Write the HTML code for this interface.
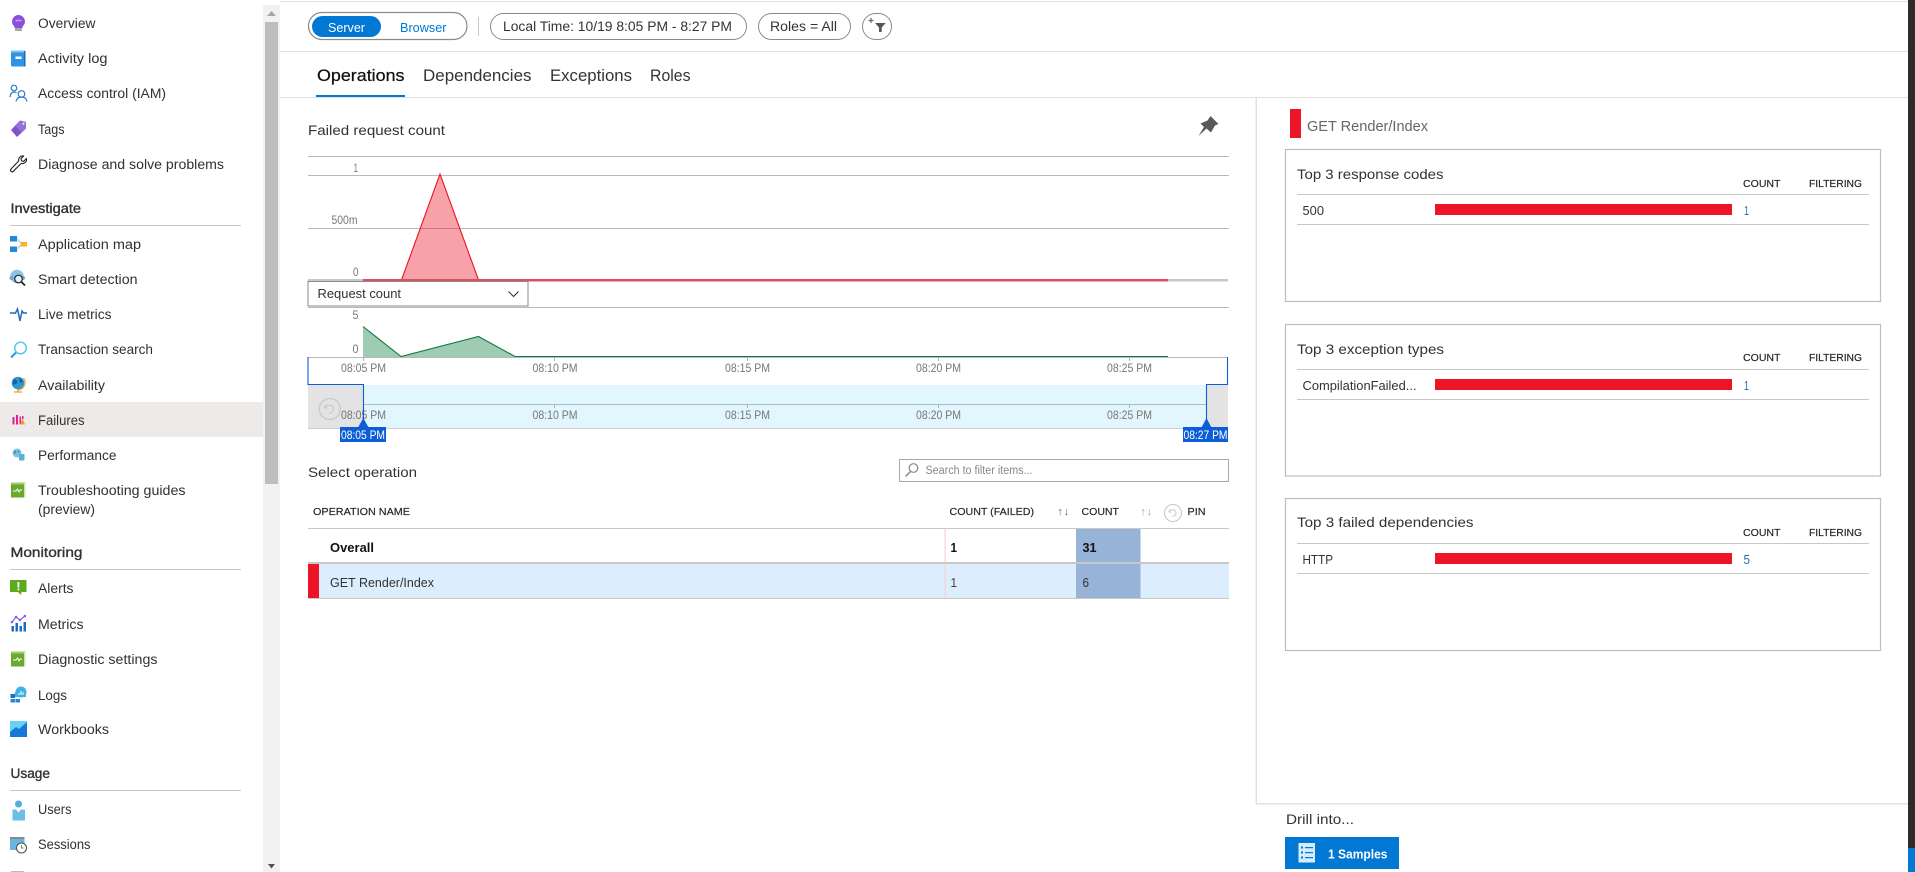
<!DOCTYPE html>
<html lang="en"><head><meta charset="utf-8"><title>Failures</title>
<style>
html,body{margin:0;padding:0;background:#fff;width:1915px;height:872px;overflow:hidden}
svg{display:block}
text{font-family:"Liberation Sans",sans-serif;white-space:pre}
.s{font-size:13.5px;fill:#323130}
.h{font-size:13.5px;fill:#323130;stroke:#323130;stroke-width:.35}
.ax{font-size:11.5px;fill:#777}
.th{font-size:10.5px;fill:#222;stroke:#222;stroke-width:.15}
.tt{font-size:14px;fill:#333}
.c{font-size:12.5px;fill:#333}
.n{font-size:12.5px;fill:#2b6cb5}
</style></head><body>
<svg width="1915" height="872" viewBox="0 0 1915 872" xmlns="http://www.w3.org/2000/svg">
<rect width="1915" height="872" fill="#fff"/>
<!-- right dark edge -->
<rect x="1908" y="0" width="7" height="872" fill="#2b2b2b"/>
<rect x="1908" y="848" width="7" height="24" fill="#0078d4"/>

<!-- sidebar scrollbar -->
<rect x="263" y="5" width="17" height="867" fill="#f1f1f1"/>
<rect x="265" y="22" width="13" height="462" fill="#bdbdbd"/>
<path d="M267 16l4.500-5 4.500 5z" fill="#a6a6a6"/>
<path d="M268 864h7l-3.500 4.500z" fill="#505050"/>

<!-- failures row -->
<rect x="0" y="402" width="263" height="35" fill="#edebe9"/>

<!-- sidebar text -->
<g class="sb">
<text class="s" x="38" y="28" textLength="57.500" lengthAdjust="spacingAndGlyphs">Overview</text>
<text class="s" x="38" y="63" textLength="69.500" lengthAdjust="spacingAndGlyphs">Activity log</text>
<text class="s" x="38" y="98" textLength="128" lengthAdjust="spacingAndGlyphs">Access control (IAM)</text>
<text class="s" x="38" y="134" textLength="26.500" lengthAdjust="spacingAndGlyphs">Tags</text>
<text class="s" x="38" y="169" textLength="186" lengthAdjust="spacingAndGlyphs">Diagnose and solve problems</text>
<text class="h" x="10.500" y="213" textLength="70.500" lengthAdjust="spacingAndGlyphs">Investigate</text>
<text class="s" x="38" y="249" textLength="103" lengthAdjust="spacingAndGlyphs">Application map</text>
<text class="s" x="38" y="284" textLength="99.500" lengthAdjust="spacingAndGlyphs">Smart detection</text>
<text class="s" x="38" y="319" textLength="73.500" lengthAdjust="spacingAndGlyphs">Live metrics</text>
<text class="s" x="38" y="354" textLength="115" lengthAdjust="spacingAndGlyphs">Transaction search</text>
<text class="s" x="38" y="390" textLength="67" lengthAdjust="spacingAndGlyphs">Availability</text>
<text class="s" x="38" y="425" textLength="46.500" lengthAdjust="spacingAndGlyphs">Failures</text>
<text class="s" x="38" y="460" textLength="78.500" lengthAdjust="spacingAndGlyphs">Performance</text>
<text class="s" x="38" y="495" textLength="147.500" lengthAdjust="spacingAndGlyphs">Troubleshooting guides</text>
<text class="s" x="38" y="514" textLength="57" lengthAdjust="spacingAndGlyphs">(preview)</text>
<text class="h" x="10.500" y="557" textLength="72" lengthAdjust="spacingAndGlyphs">Monitoring</text>
<text class="s" x="38" y="593" textLength="35.500" lengthAdjust="spacingAndGlyphs">Alerts</text>
<text class="s" x="38" y="629" textLength="45.500" lengthAdjust="spacingAndGlyphs">Metrics</text>
<text class="s" x="38" y="664" textLength="119.500" lengthAdjust="spacingAndGlyphs">Diagnostic settings</text>
<text class="s" x="38" y="700" textLength="29" lengthAdjust="spacingAndGlyphs">Logs</text>
<text class="s" x="38" y="734" textLength="71" lengthAdjust="spacingAndGlyphs">Workbooks</text>
<text class="h" x="10.500" y="778" textLength="39.500" lengthAdjust="spacingAndGlyphs">Usage</text>
<text class="s" x="38" y="814" textLength="33.500" lengthAdjust="spacingAndGlyphs">Users</text>
<text class="s" x="38" y="849" textLength="52.500" lengthAdjust="spacingAndGlyphs">Sessions</text>
</g>
<rect x="10" y="225" width="231" height="1" fill="#c8c6c4"/>
<rect x="10" y="569" width="231" height="1" fill="#c8c6c4"/>
<rect x="10" y="790" width="231" height="1" fill="#c8c6c4"/>

<!-- sidebar icons -->
<!-- overview -->
<path d="M18.500 15a6.500 6.500 0 0 1 4 11.600V28h-8v-1.400A6.500 6.500 0 0 1 18.500 15z" fill="#8a4fdc"/>
<path d="M15.500 20l1.500 1 1.500-1 1.500 1 1.500-1" stroke="#d9c4f5" fill="none" stroke-width=".8"/>
<rect x="15" y="28" width="7" height="3" fill="#a8a8a8"/>
<!-- activity log -->
<rect x="11" y="50.500" width="14" height="16" rx="1" fill="#2f93e6"/>
<rect x="11" y="50.500" width="14" height="2" fill="#7cc0f0"/>
<rect x="24" y="51" width="1.500" height="15.500" fill="#1a6cb5"/>
<rect x="15.500" y="56.500" width="6" height="2.500" fill="#fff"/>
<!-- access -->
<g fill="none" stroke="#2a78d6" stroke-width="1.200">
<circle cx="14" cy="88" r="2.800"/><path d="M10 97c.5-3.500 2-5 4-5 1 0 2 .3 2.500 1"/>
<circle cx="21.500" cy="94" r="3.300"/><path d="M16 101.500c.7-3.500 2.700-4.500 5.500-4.500s4.800 1 5.500 4.500"/>
</g>
<!-- tags -->
<path d="M20 120.500l6 1.500v6.500l-9 8.500-6-7z" fill="#7f53c9"/>
<path d="M20 120.500l6 1.500v6.500l-4 4-7-7z" fill="#a07ee0" opacity=".7"/>
<circle cx="23.500" cy="123.800" r="1" fill="#fff"/>
<!-- wrench -->
<path d="M26.500 158.500l-3 3-2-.8-.5-2 2.700-2.700c-2.700-.5-5.500 1.500-5 5l-7.700 8c-1.500 1.700.7 3.800 2.300 2.300l7.800-7.800c3.300.7 6-2 5.400-5z" fill="none" stroke="#222" stroke-width="1.100" stroke-linejoin="round"/>
<!-- app map -->
<rect x="10" y="236" width="7" height="5.500" fill="#2488d8"/>
<rect x="10" y="246.500" width="7" height="5.500" fill="#2488d8"/>
<rect x="20.500" y="242" width="6.500" height="4.500" fill="#ffb01f"/>
<path d="M17 239l4 4M17 249l4-4" stroke="#9cc9ec" stroke-width="1.200"/>
<!-- smart detection -->
<circle cx="17" cy="276.500" r="6.800" fill="#8cc4e6"/>
<circle cx="11.500" cy="278" r="2" fill="#6aaed8"/><circle cx="23" cy="278" r="2" fill="#6aaed8"/>
<circle cx="18.500" cy="279" r="3.800" fill="#e8f4fb" stroke="#222" stroke-width="1.200"/>
<path d="M21.500 282l3.500 3.500" stroke="#222" stroke-width="1.800"/>
<!-- live metrics -->
<polyline points="10,313 15.500,313 17.500,309 20,321 22,311 23.500,313 27,313" fill="none" stroke="#1f6fb8" stroke-width="1.500"/>
<!-- transaction -->
<circle cx="20.500" cy="348" r="5.800" fill="#fff" stroke="#4cc6ee" stroke-width="1.400"/>
<path d="M16 352.500l-5 5" stroke="#2a9fd6" stroke-width="2"/>
<!-- availability -->
<circle cx="18" cy="383" r="6.300" fill="#2b9ac8"/>
<path d="M13 380c3-2 5 1 4 3s-3 1-4 2zM19 378c2 0 4 2 4 4l-3 1z" fill="#1b5fb5"/>
<path d="M23.500 378a7.500 7.500 0 0 1-6 12" fill="none" stroke="#f5a040" stroke-width="1.300"/>
<path d="M14 392h8" stroke="#f5a040" stroke-width="1.300"/>
<rect x="17" y="389.500" width="1.500" height="3" fill="#f5a040"/>
<!-- failures -->
<rect x="12.500" y="417" width="2" height="7.500" fill="#e6208c"/>
<rect x="16" y="415" width="2" height="9.500" fill="#e6208c"/>
<rect x="19.500" y="416.500" width="1.500" height="8" fill="#e6208c"/>
<path d="M20 424.500l2.500-6 2.500 6z" fill="#f59a23"/>
<rect x="22" y="416" width="1.500" height="3" fill="#e6208c"/>
<!-- performance -->
<circle cx="17" cy="453" r="4.500" fill="#7fc0e6"/>
<path d="M14 451c2-1 3 1 2 2s-2 0-2 1zM18 450l2 2-2 1z" fill="#3d8fc7"/>
<rect x="19" y="454" width="5.500" height="6.500" rx=".5" fill="#5db0dc"/>
<!-- troubleshooting book -->
<rect x="11" y="482.500" width="14.500" height="15" fill="#69a92d"/>
<rect x="11" y="482.500" width="14.500" height="2" fill="#9ed066"/>
<rect x="24" y="483" width="1.500" height="14.500" fill="#cfe5ac"/>
<path d="M13 491h3l1.500-2 1.500 3 1-2h2" stroke="#fff" fill="none" stroke-width=".9"/>
<!-- alerts -->
<path d="M10 580h16.500v12h-5l-.5 3-3-3h-8z" fill="#5da91f"/>
<rect x="17.500" y="582" width="1.800" height="5.500" fill="#fff"/>
<rect x="17.500" y="588.500" width="1.800" height="1.800" fill="#fff"/>
<!-- metrics -->
<rect x="11.500" y="626" width="2.500" height="5.500" fill="#1b6ec2"/>
<rect x="15.500" y="623" width="2.500" height="8.500" fill="#1b6ec2"/>
<rect x="19.500" y="626" width="2.500" height="5.500" fill="#1b6ec2"/>
<rect x="23.500" y="622" width="2.500" height="9.500" fill="#1b6ec2"/>
<polyline points="12,622 16,617 20,620 25,616" stroke="#8f5ce0" stroke-width="1.200" fill="none"/>
<circle cx="12" cy="622" r="1.300" fill="#8f5ce0"/><circle cx="16" cy="617" r="1.300" fill="#8f5ce0"/><circle cx="20" cy="620" r="1.300" fill="#8f5ce0"/><circle cx="25" cy="616" r="1.300" fill="#8f5ce0"/>
<!-- diagnostic book -->
<rect x="11" y="651.500" width="14.500" height="15" fill="#69a92d"/>
<rect x="11" y="651.500" width="14.500" height="2" fill="#9ed066"/>
<rect x="24" y="652" width="1.500" height="14.500" fill="#cfe5ac"/>
<path d="M13 660h3l1.500-2 1.500 3 1-2h2" stroke="#fff" fill="none" stroke-width=".9"/>
<!-- logs -->
<circle cx="21" cy="692" r="5.500" fill="#3db2e8"/><rect x="15" y="692" width="11" height="5" fill="#3db2e8"/>
<path d="M19 695v-2M21 695v-4M23 695v-3" stroke="#fff" stroke-width="1"/>
<rect x="10.500" y="694" width="4.500" height="4" fill="#1b6ec2"/>
<rect x="10.500" y="699" width="4.500" height="3.500" fill="#2488d8"/>
<rect x="15.500" y="699" width="4.500" height="3.500" fill="#2488d8"/>
<!-- workbooks -->
<rect x="10" y="721" width="17" height="16" fill="#66d2f5"/>
<path d="M10 737v-5l6-5 3 2 8-7v15z" fill="#1878d8"/>
<!-- users -->
<circle cx="18.500" cy="804" r="3.500" fill="#55aee0"/>
<path d="M12.500 809.500h3.500l2.500 3 2.500-3h4v11h-12.500z" fill="#6cbde8"/>
<!-- sessions -->
<rect x="10" y="837" width="14.500" height="13" fill="#6ab4e4"/>
<rect x="10" y="837" width="14.500" height="2" fill="#8a8a8a"/>
<circle cx="21.500" cy="848" r="5" fill="#fff" stroke="#555" stroke-width="1.100"/>
<path d="M21.500 845v3h2" stroke="#5a9a30" fill="none" stroke-width="1"/>
<rect x="11" y="871" width="13" height="1" fill="#bbb"/>

<!-- top lines -->
<rect x="280" y="1" width="1628" height="1" fill="#e1e1e1"/>
<rect x="280" y="51" width="1628" height="1" fill="#e1e1e1"/>
<rect x="280" y="97" width="1628" height="1" fill="#e1e1e1"/>

<!-- toolbar -->
<rect x="308.500" y="12.500" width="158.500" height="27" rx="13.500" fill="#fff" stroke="#8a8a8a" stroke-width="1.200"/>
<rect x="312" y="16" width="69" height="21" rx="10.500" fill="#0078d4"/>
<text x="328" y="32" font-size="12.500" fill="#fff" textLength="37" lengthAdjust="spacingAndGlyphs">Server</text>
<text x="400" y="32" font-size="12.500" fill="#0078d4" textLength="46.500" lengthAdjust="spacingAndGlyphs">Browser</text>
<rect x="478" y="17" width="1" height="19" fill="#c8c8c8"/>
<rect x="490.500" y="13.500" width="256" height="26" rx="13" fill="#fff" stroke="#8a8a8a"/>
<text x="503" y="31" font-size="13.500" fill="#333" textLength="229" lengthAdjust="spacingAndGlyphs">Local Time: 10/19 8:05 PM - 8:27 PM</text>
<rect x="758.500" y="13.500" width="92" height="26" rx="13" fill="#fff" stroke="#8a8a8a"/>
<text x="770" y="31" font-size="13.500" fill="#333" textLength="67" lengthAdjust="spacingAndGlyphs">Roles = All</text>
<rect x="862.500" y="13.500" width="29" height="26" rx="13" fill="#fff" stroke="#8a8a8a"/>
<path d="M875 23h10.700l-4 4.500V32h-2.700v-4.500z" fill="#555"/>
<path d="M871 18v5M868.500 20.500h5" stroke="#666" stroke-width="1.200"/>

<!-- tabs -->
<text x="317" y="81" font-size="17" fill="#111" stroke="#111" stroke-width=".25" textLength="87.500" lengthAdjust="spacingAndGlyphs">Operations</text>
<text x="423" y="81" font-size="17" fill="#333" textLength="108.500" lengthAdjust="spacingAndGlyphs">Dependencies</text>
<text x="550" y="81" font-size="17" fill="#333" textLength="82" lengthAdjust="spacingAndGlyphs">Exceptions</text>
<text x="650" y="81" font-size="17" fill="#333" textLength="40.500" lengthAdjust="spacingAndGlyphs">Roles</text>
<rect x="316" y="95" width="89" height="2" fill="#0078d4"/>

<!-- vertical divider -->
<rect x="1255.500" y="98" width="1.500" height="706" fill="#e1e1e1"/>
<rect x="1255.500" y="803" width="652.500" height="1.500" fill="#e1e1e1"/>

<!-- chart 1 -->
<text class="tt" x="308" y="135" textLength="137" lengthAdjust="spacingAndGlyphs">Failed request count</text>
<path d="M1210.500 116l8 8-3.500 1.500-4 7-4.500-4-8 7.500 5.500-9-3.500-3.500 7-3z" fill="#595959"/>
<rect x="308" y="156" width="921" height="1" fill="#b8b8b8"/>
<rect x="308" y="175" width="921" height="1" fill="#b8b8b8"/>
<rect x="308" y="228" width="921" height="1" fill="#b8b8b8"/>
<text class="ax" x="353.500" y="172" textLength="4.500" lengthAdjust="spacingAndGlyphs">1</text>
<text class="ax" x="331.500" y="224" textLength="26" lengthAdjust="spacingAndGlyphs">500m</text>
<text class="ax" x="353" y="276" textLength="5.500" lengthAdjust="spacingAndGlyphs">0</text>
<rect x="308" y="279" width="920" height="2.500" fill="#c8c8c8"/>
<polygon points="401.500,280 440,174 478.500,280" fill="#ec1426" fill-opacity=".4"/>
<polyline points="401.500,280 440,174 478.500,280" fill="none" stroke="#ec1426" stroke-width="1.100"/>
<rect x="363" y="279" width="805" height="2.500" fill="#dd5060"/>
<rect x="308" y="281.500" width="220" height="24.500" fill="#fff" stroke="#8a8a8a"/>
<text x="317.500" y="298" font-size="12.500" fill="#333" textLength="83.500" lengthAdjust="spacingAndGlyphs">Request count</text>
<path d="M508.500 291.500l5 5 5-5" fill="none" stroke="#333" stroke-width="1.100"/>

<!-- chart 2 -->
<rect x="308" y="307" width="921" height="1" fill="#b8b8b8"/>
<text class="ax" x="352.500" y="319" textLength="6" lengthAdjust="spacingAndGlyphs">5</text>
<text class="ax" x="352.500" y="353" textLength="6" lengthAdjust="spacingAndGlyphs">0</text>
<polygon points="363,326.500 401,356.500 478.500,336.500 515,356.500 515,357 363,357" fill="#107c41" fill-opacity=".4"/>
<polyline points="363,326.500 401,356.500 478.500,336.500 515,356.500 1168,356.500" fill="none" stroke="#107c41" stroke-width="1.100"/>
<rect x="515" y="356" width="653" height="1.500" fill="#107c41"/>

<!-- brush -->
<rect x="363" y="385" width="843" height="43" fill="#e2f6fd"/>
<rect x="308" y="385" width="55" height="43" fill="#e3e3e3"/>
<rect x="1206" y="385" width="22" height="43" fill="#e3e3e3"/>
<rect x="308" y="357" width="920" height="1" fill="#b8b8b8"/>
<rect x="308" y="428" width="920" height="1" fill="#cfcfcf"/>
<rect x="363" y="404" width="843" height="1" fill="#a8bcc4"/>
<g fill="#b0b0b0">
<rect x="363" y="357" width="1" height="4"/><rect x="554" y="357" width="1" height="4"/><rect x="747" y="357" width="1" height="4"/><rect x="938" y="357" width="1" height="4"/><rect x="1129" y="357" width="1" height="4"/>
<rect x="554" y="404" width="1" height="4"/><rect x="747" y="404" width="1" height="4"/><rect x="938" y="404" width="1" height="4"/><rect x="1129" y="404" width="1" height="4"/>
</g>
<text class="ax" x="341" y="372" textLength="45" lengthAdjust="spacingAndGlyphs">08:05 PM</text>
<text class="ax" x="532.500" y="372" textLength="45" lengthAdjust="spacingAndGlyphs">08:10 PM</text>
<text class="ax" x="725" y="372" textLength="45" lengthAdjust="spacingAndGlyphs">08:15 PM</text>
<text class="ax" x="916" y="372" textLength="45" lengthAdjust="spacingAndGlyphs">08:20 PM</text>
<text class="ax" x="1107" y="372" textLength="45" lengthAdjust="spacingAndGlyphs">08:25 PM</text>
<text class="ax" x="341" y="419" textLength="45" lengthAdjust="spacingAndGlyphs">08:05 PM</text>
<text class="ax" x="532.500" y="419" textLength="45" lengthAdjust="spacingAndGlyphs">08:10 PM</text>
<text class="ax" x="725" y="419" textLength="45" lengthAdjust="spacingAndGlyphs">08:15 PM</text>
<text class="ax" x="916" y="419" textLength="45" lengthAdjust="spacingAndGlyphs">08:20 PM</text>
<text class="ax" x="1107" y="419" textLength="45" lengthAdjust="spacingAndGlyphs">08:25 PM</text>
<circle cx="329.800" cy="409" r="10.500" fill="none" stroke="#c8c8c8" stroke-width="1.200"/>
<path d="M326 404.500l-1.500 3 3 .8M325 407.500c2-3 8-3.500 8.500 1 .3 3-2.500 4.500-4.500 5" fill="none" stroke="#c8c8c8" stroke-width="1.100"/>
<path d="M308 357v27.500h55.500V420M1227.500 357v27.500H1206.500V420" fill="none" stroke="#0b5ed7" stroke-width="1.100"/>
<path d="M358 427.500l5.300-9.500 5.300 9.500z" fill="#0b5ed7"/>
<path d="M1201.500 427.500l5-9.500 5 9.500z" fill="#0b5ed7"/>
<rect x="340" y="427" width="46" height="15" fill="#0b5ed7"/>
<rect x="1183" y="427" width="45" height="15" fill="#0b5ed7"/>
<text x="341" y="439" font-size="11.500" fill="#fff" textLength="44" lengthAdjust="spacingAndGlyphs">08:05 PM</text>
<text x="1183.500" y="439" font-size="11.500" fill="#fff" textLength="44" lengthAdjust="spacingAndGlyphs">08:27 PM</text>

<!-- select operation -->
<text class="tt" x="308" y="477" textLength="109" lengthAdjust="spacingAndGlyphs">Select operation</text>
<rect x="899.500" y="459.500" width="329" height="22" fill="#fff" stroke="#a8a8a8"/>
<circle cx="913.500" cy="468" r="4.300" fill="none" stroke="#888" stroke-width="1.200"/>
<path d="M910.500 471.500l-5 5" stroke="#888" stroke-width="1.500"/>
<text x="925.500" y="474" font-size="11.500" fill="#888" textLength="107" lengthAdjust="spacingAndGlyphs">Search to filter items...</text>

<!-- table -->
<text class="th" x="313" y="515" textLength="97" lengthAdjust="spacingAndGlyphs">OPERATION NAME</text>
<text class="th" x="949.500" y="515" textLength="84.500" lengthAdjust="spacingAndGlyphs">COUNT (FAILED)</text>
<text x="1057" y="515" font-size="11" fill="#777" textLength="12.500" lengthAdjust="spacingAndGlyphs">↑↓</text>
<text class="th" x="1081.500" y="515" textLength="37.500" lengthAdjust="spacingAndGlyphs">COUNT</text>
<text x="1140" y="515" font-size="11" fill="#aaa" textLength="12.500" lengthAdjust="spacingAndGlyphs">↑↓</text>
<circle cx="1173" cy="513" r="8.500" fill="none" stroke="#c8c8c8" stroke-width="1.100"/>
<path d="M1170 509.500l-1 2.300 2.300.6M1169.200 511.500c1.500-2.500 6.500-2.500 6.800 1 .2 2.300-2 3.500-3.500 4" fill="none" stroke="#c8c8c8" stroke-width="1"/>
<text class="th" x="1187.500" y="515" textLength="18" lengthAdjust="spacingAndGlyphs">PIN</text>
<rect x="308" y="528" width="921" height="1" fill="#c8c8c8"/>
<rect x="308" y="564" width="921" height="34" fill="#dcedfd"/>
<rect x="1076" y="529" width="64.500" height="69" fill="#97b3d7"/>
<rect x="944.500" y="529" width="1.200" height="69" fill="#f9d3d6"/>
<rect x="308" y="562" width="921" height="2" fill="#c8c8c8"/>
<rect x="308" y="598" width="921" height="1" fill="#c8c8c8"/>
<rect x="308" y="564" width="11" height="34" fill="#ec1426"/>
<text x="330" y="552" font-size="13" font-weight="bold" fill="#111" textLength="44" lengthAdjust="spacingAndGlyphs">Overall</text>
<text x="330" y="587" font-size="13" fill="#333" textLength="104" lengthAdjust="spacingAndGlyphs">GET Render/Index</text>
<text x="950.500" y="552" font-size="13" font-weight="bold" fill="#111" textLength="6.500" lengthAdjust="spacingAndGlyphs">1</text>
<text x="1082.500" y="552" font-size="13" font-weight="bold" fill="#111" textLength="14" lengthAdjust="spacingAndGlyphs">31</text>
<text x="950.500" y="587" font-size="13" fill="#444" textLength="6.500" lengthAdjust="spacingAndGlyphs">1</text>
<text x="1082.500" y="587" font-size="13" fill="#333" textLength="6.500" lengthAdjust="spacingAndGlyphs">6</text>

<!-- right panel -->
<rect x="1290" y="109" width="11" height="29" fill="#ec1426"/>
<text x="1307" y="131" font-size="14.500" fill="#666" textLength="121" lengthAdjust="spacingAndGlyphs">GET Render/Index</text>

<rect x="1285.500" y="149.500" width="595" height="152" fill="#fff" stroke="#bdbdbd" stroke-width="1.200"/>
<text class="tt" x="1297" y="179" textLength="146.500" lengthAdjust="spacingAndGlyphs">Top 3 response codes</text>
<text class="th" x="1743" y="187" textLength="37.500" lengthAdjust="spacingAndGlyphs">COUNT</text>
<text class="th" x="1809" y="187" textLength="53" lengthAdjust="spacingAndGlyphs">FILTERING</text>
<rect x="1297" y="194" width="572" height="1" fill="#c8c8c8"/>
<text class="c" x="1302.500" y="215" textLength="21.500" lengthAdjust="spacingAndGlyphs">500</text>
<rect x="1435" y="204" width="297" height="11" fill="#ec1426"/>
<text class="n" x="1744" y="215" textLength="5" lengthAdjust="spacingAndGlyphs">1</text>
<rect x="1297" y="224" width="572" height="1" fill="#c8c8c8"/>

<rect x="1285.500" y="324.500" width="595" height="151.500" fill="#fff" stroke="#bdbdbd" stroke-width="1.200"/>
<text class="tt" x="1297" y="354" textLength="147" lengthAdjust="spacingAndGlyphs">Top 3 exception types</text>
<text class="th" x="1743" y="361" textLength="37.500" lengthAdjust="spacingAndGlyphs">COUNT</text>
<text class="th" x="1809" y="361" textLength="53" lengthAdjust="spacingAndGlyphs">FILTERING</text>
<rect x="1297" y="369" width="572" height="1" fill="#c8c8c8"/>
<text class="c" x="1302.500" y="390" textLength="114" lengthAdjust="spacingAndGlyphs">CompilationFailed...</text>
<rect x="1435" y="379" width="297" height="11" fill="#ec1426"/>
<text class="n" x="1744" y="390" textLength="5" lengthAdjust="spacingAndGlyphs">1</text>
<rect x="1297" y="399" width="572" height="1" fill="#c8c8c8"/>

<rect x="1285.500" y="498.500" width="595" height="152" fill="#fff" stroke="#bdbdbd" stroke-width="1.200"/>
<text class="tt" x="1297" y="527" textLength="176.500" lengthAdjust="spacingAndGlyphs">Top 3 failed dependencies</text>
<text class="th" x="1743" y="536" textLength="37.500" lengthAdjust="spacingAndGlyphs">COUNT</text>
<text class="th" x="1809" y="536" textLength="53" lengthAdjust="spacingAndGlyphs">FILTERING</text>
<rect x="1297" y="543" width="572" height="1" fill="#c8c8c8"/>
<text class="c" x="1302.500" y="564" textLength="30.500" lengthAdjust="spacingAndGlyphs">HTTP</text>
<rect x="1435" y="553" width="297" height="11" fill="#ec1426"/>
<text class="n" x="1743.500" y="564" textLength="6.500" lengthAdjust="spacingAndGlyphs">5</text>
<rect x="1297" y="573" width="572" height="1" fill="#c8c8c8"/>

<text x="1286" y="824" font-size="14" fill="#333" textLength="68" lengthAdjust="spacingAndGlyphs">Drill into...</text>
<rect x="1285" y="837" width="114" height="32" fill="#0078d4"/>
<rect x="1298.500" y="843" width="16.500" height="19.500" fill="#d6ecf9"/>
<g fill="#0078d4">
<rect x="1301" y="846.500" width="2" height="2"/><rect x="1305" y="847" width="8" height="1.200"/>
<rect x="1301" y="851.500" width="2" height="2"/><rect x="1305" y="852" width="8" height="1.200"/>
<rect x="1301" y="856.500" width="2" height="2"/><rect x="1305" y="857" width="8" height="1.200"/>
</g>
<text x="1328" y="858.500" font-size="13" font-weight="bold" fill="#fff" textLength="59.500" lengthAdjust="spacingAndGlyphs">1 Samples</text>
</svg>
</body></html>
